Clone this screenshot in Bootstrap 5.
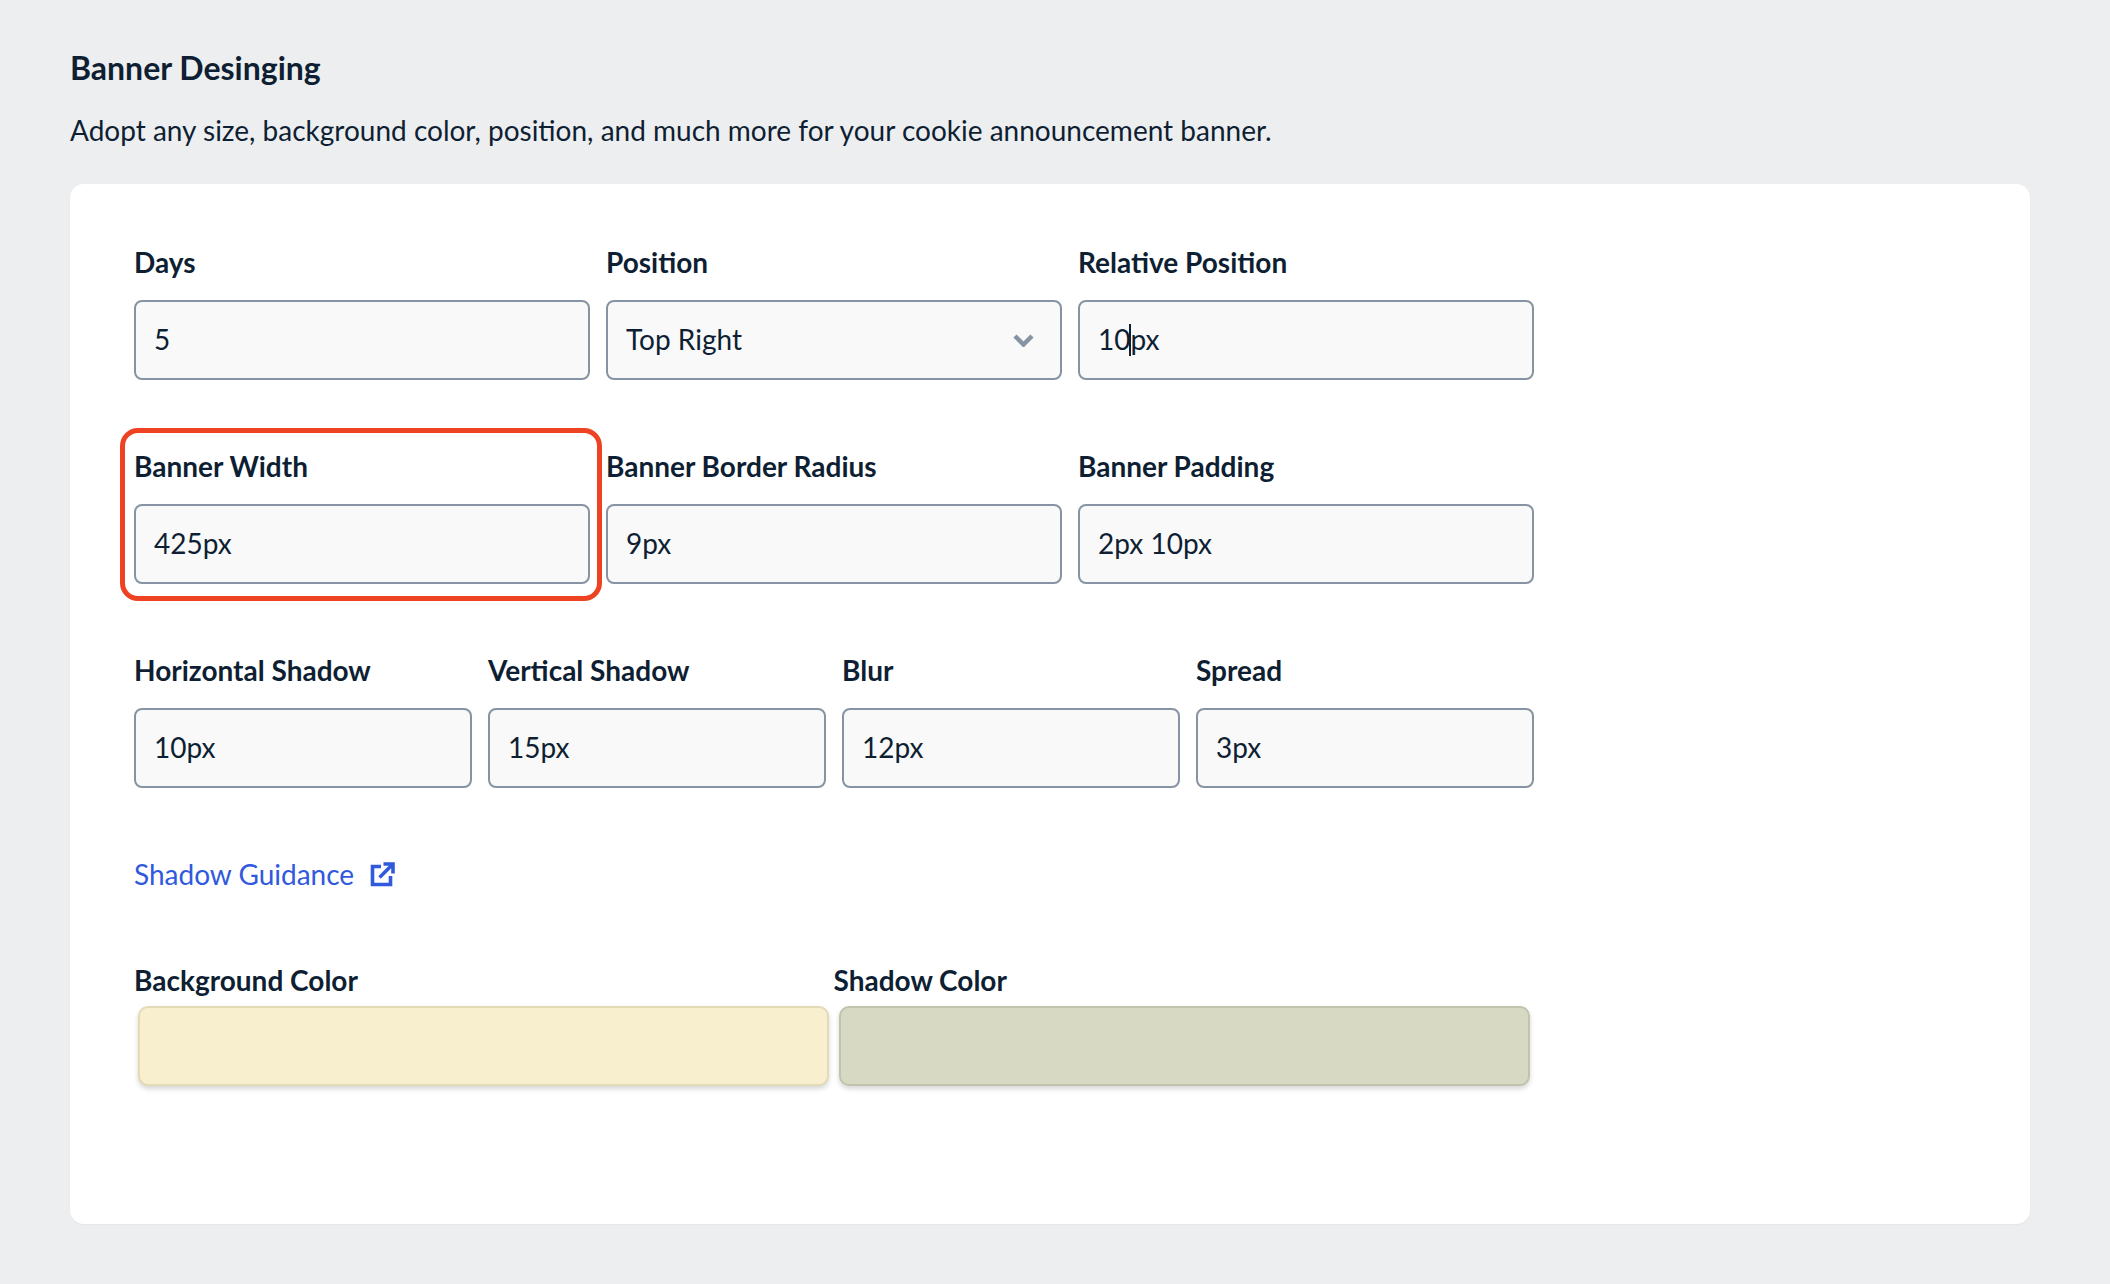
<!DOCTYPE html>
<html><head><meta charset="utf-8">
<link href="https://cdn.jsdelivr.net/npm/bootstrap@5.3.0/dist/css/bootstrap.min.css" rel="stylesheet">
<style>
html,body{height:100%}
body{background:#edeef0;font-family:Lato,"Liberation Sans",sans-serif;color:#0f1f33;margin:0;padding:50px 80px 0 70px;overflow:hidden}
.ttl{font-size:32px;font-weight:700;line-height:36px;margin:0 0 26px;color:#0f1f33}
.sub{font-size:28px;line-height:36px;margin:0 0 36px}
.panel{background:#fff;border-radius:14px;height:1040px;padding:62px 0 0 64px;box-shadow:0 1px 2px rgba(0,0,0,.04)}
.frm{width:1400px;display:flex;flex-direction:column;gap:70px}
.rw{display:flex;gap:16px}
.rw>div{flex:1 1 0;min-width:0}
.lb{display:block;font-size:28px;font-weight:700;line-height:32px;margin:0 0 22px;color:#0f1f33}
.ctl{height:80px;border:2px solid #8693a3;border-radius:8px;background-color:#f9f9f9;font-size:28px;padding:0 18px 2px;color:#0f1f33;box-shadow:none}
select.ctl{background-image:url("data:image/svg+xml,%3Csvg xmlns='http://www.w3.org/2000/svg' viewBox='0 0 21 13'%3E%3Cpath d='M2 2l8.500 8.500L19 2' fill='none' stroke='%238593a3' stroke-width='4.500'/%3E%3C/svg%3E");background-size:21px 13px;background-position:right 26px center}
.carets{display:inline-block;width:2px;height:32px;background:#0f1f33;vertical-align:-6px;margin:0 -1px}
.hl{position:relative}
.hl::after{content:"";position:absolute;left:-14px;right:-12px;top:-22px;bottom:-17px;border:5px solid #ee4323;border-radius:18px;pointer-events:none}
.lnk{display:inline-flex;align-items:center;gap:16px;font-size:28px;line-height:36px;color:#3059de;text-decoration:none;margin-top:-2px}
.cols{display:flex;width:1399px;margin-top:72px}
.cols>div{flex:0 0 699.500px}
.cols .lb{margin-bottom:10px}
.swa{height:80px;border-radius:10px;border:2px solid;box-shadow:0 3px 5px rgba(0,0,0,.16)}
.swb{background:#f8efcf;border-color:#e3dab6;margin:0 5px 0 3.500px}
.swc{background:#d7d9c3;border-color:#c1c4ac;margin:0 3.500px 0 5px}
</style></head><body>
<h1 class="ttl">Banner Desinging</h1>
<p class="sub">Adopt any size, background color, position, and much more for your cookie announcement banner.</p>
<div class="panel"><div class="frm">
<div class="rw">
<div><label class="lb">Days</label><input class="form-control ctl" value="5"></div>
<div><label class="lb">Position</label><select class="form-select ctl"><option>Top Right</option></select></div>
<div><label class="lb">Relative Position</label><div class="form-control ctl d-flex align-items-center"><span>10<span class="carets"></span>px</span></div></div>
</div>
<div class="rw">
<div class="hl"><label class="lb">Banner Width</label><input class="form-control ctl" value="425px"></div>
<div><label class="lb">Banner Border Radius</label><input class="form-control ctl" value="9px"></div>
<div><label class="lb">Banner Padding</label><input class="form-control ctl" value="2px 10px"></div>
</div>
<div class="rw">
<div><label class="lb">Horizontal Shadow</label><input class="form-control ctl" value="10px"></div>
<div><label class="lb">Vertical Shadow</label><input class="form-control ctl" value="15px"></div>
<div><label class="lb">Blur</label><input class="form-control ctl" value="12px"></div>
<div><label class="lb">Spread</label><input class="form-control ctl" value="3px"></div>
</div>
<div><a class="lnk" href="#">Shadow Guidance
<svg width="25" height="25" viewBox="0 0 25 25" fill="none" stroke="currentColor" stroke-width="3.600"><path d="M11 4.500H2.500V22.500H20.500V14"/><path d="M9.500 15.500L22.500 2.500"/><path d="M13.500 2H23V11.500"/></svg></a></div>
</div>
<div class="cols">
<div><label class="lb">Background Color</label><div class="swa swb"></div></div>
<div><label class="lb">Shadow Color</label><div class="swa swc"></div></div>
</div>
</div>
</body></html>
